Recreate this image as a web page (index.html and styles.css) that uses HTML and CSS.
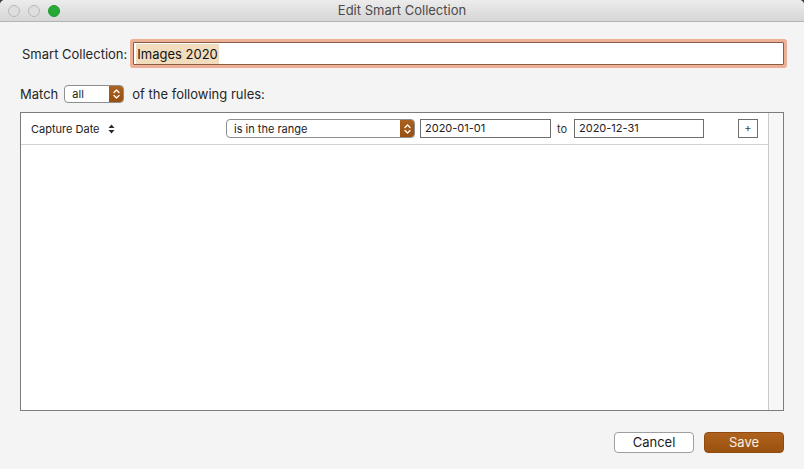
FILE: index.html
```html
<!DOCTYPE html>
<html>
<head>
<meta charset="utf-8">
<link rel="stylesheet" href="styles.css">
</head>
<body>
<div class="window">
  <div class="titlebar">
    <div class="lights">
      <span class="light gray"></span>
      <span class="light gray"></span>
      <span class="light green"></span>
    </div>
    <div class="title">Edit Smart Collection</div>
  </div>
  <div class="content">
    <div class="name-row">
      <span class="label">Smart Collection:</span>
      <div class="name-input"><span class="sel">Images 2020</span></div>
    </div>
    <div class="match-row">
      <span class="label">Match</span>
      <div class="popup small">
        <span class="popup-text">all</span>
        <span class="stepper"><svg width="9" height="12" viewBox="0 0 9 12"><path d="M2 4.5 L4.5 2 L7 4.5 M2 7.5 L4.5 10 L7 7.5" fill="none" stroke="#fff" stroke-width="1.3" stroke-linecap="round" stroke-linejoin="round"/></svg></span>
      </div>
      <span class="label">of the following rules:</span>
    </div>
    <div class="rules">
      <div class="rules-list">
        <div class="rule">
          <div class="field-name">Capture Date <svg class="sort" width="7" height="10" viewBox="0 0 7 10"><path d="M0.5 4 L3.5 0.5 L6.5 4 Z M0.5 6 L3.5 9.5 L6.5 6 Z" fill="#2a2a2a"/></svg></div>
          <div class="popup wide">
            <span class="popup-text">is in the range</span>
            <span class="stepper"><svg width="9" height="12" viewBox="0 0 9 12"><path d="M2 4.5 L4.5 2 L7 4.5 M2 7.5 L4.5 10 L7 7.5" fill="none" stroke="#fff" stroke-width="1.3" stroke-linecap="round" stroke-linejoin="round"/></svg></span>
          </div>
          <div class="textfield f1">2020-01-01</div>
          <span class="to">to</span>
          <div class="textfield f2">2020-12-31</div>
          <div class="plus">+</div>
        </div>
      </div>
      <div class="scroll"></div>
    </div>
    <div class="buttons">
      <div class="btn cancel">Cancel</div>
      <div class="btn save">Save</div>
    </div>
  </div>
</div>
</body>
</html>
```
FILE: styles.css
```css
html, body {
  margin: 0;
  padding: 0;
  background: #3c3c3c;
}
body {
  width: 804px;
  height: 469px;
  overflow: hidden;
  font-family: Inter, "Liberation Sans", sans-serif;
  color: #262626;
}
.window {
  width: 804px;
  height: 469px;
  background: #f4f4f4;
  border-radius: 5px 5px 0 0;
  overflow: hidden;
  display: flex;
  flex-direction: column;
}
.titlebar {
  height: 21px;
  flex: none;
  border-bottom: 1px solid #b4b4b4;
  background: linear-gradient(#ececec, #d6d6d6);
  display: flex;
  align-items: center;
  position: relative;
}
.lights {
  display: flex;
  gap: 8px;
  padding-left: 8px;
}
.light {
  width: 12px;
  height: 12px;
  border-radius: 50%;
  box-sizing: border-box;
}
.light.gray {
  background: #dedede;
  border: 1px solid #b8b8b8;
}
.light.green {
  background: #27a935;
  border: 1px solid #1e9a2b;
}
.title {
  position: absolute;
  left: 0;
  right: 0;
  top: 0;
  line-height: 21px;
  text-align: center;
  font-size: 13px;
  color: #4a4a4a;
}
.content {
  padding: 0 20px;
  display: flex;
  flex-direction: column;
}
.label {
  font-size: 13px;
  color: #262626;
}
.name-row {
  margin-top: 20px;
  display: flex;
  align-items: center;
  padding-left: 2px;
  gap: 6px;
}
.name-input {
  flex: 1;
  height: 23px;
  box-sizing: border-box;
  border: 1px solid #8d5a42;
  background: #fff;
  box-shadow: 0 0 0 3px #ebb095;
  border-radius: 1px;
  display: flex;
  align-items: center;
  padding-left: 2px;
  font-size: 13px;
  color: #111;
}
.sel {
  background: #f1dcbd;
  line-height: 20px;
  padding: 0 1px;
}
.match-row {
  margin-top: 20px;
  display: flex;
  align-items: center;
  gap: 6px;
}
.match-row .popup {
  margin-right: 2px;
}
.popup {
  height: 18px;
  box-sizing: border-box;
  border: 1px solid #8e8e8e;
  border-radius: 4px;
  background: #fff;
  display: flex;
  align-items: center;
  overflow: hidden;
}
.popup.small {
  width: 60px;
}
.popup.wide {
  width: 189px;
  height: 19px;
}
.popup-text {
  flex: 1;
  font-size: 11px;
  padding-left: 7px;
  color: #222;
}
.stepper {
  width: 14px;
  height: 100%;
  background: linear-gradient(#ab611f, #97500f);
  display: flex;
  align-items: center;
  justify-content: center;
}
.rules {
  margin-top: 9px;
  height: 299px;
  box-sizing: border-box;
  border: 1px solid #7c7c7c;
  background: #fff;
  display: grid;
  grid-template-columns: 1fr 15px;
}
.rules-list {
  display: flex;
  flex-direction: column;
}
.rule {
  height: 32px;
  box-sizing: border-box;
  border-bottom: 1px solid #d2d2d2;
  display: flex;
  align-items: center;
  padding-left: 10px;
  font-size: 11px;
}
.field-name {
  width: 195px;
  display: flex;
  align-items: center;
  gap: 8px;
  color: #222;
}
.textfield {
  height: 19px;
  box-sizing: border-box;
  border: 1px solid #6e6e6e;
  background: #fff;
  font-size: 11px;
  line-height: 17px;
  padding-left: 4px;
  color: #222;
}
.f1 {
  width: 131px;
  margin-left: 5px;
}
.to {
  margin-left: 6px;
  width: 17px;
  color: #333;
}
.f2 {
  width: 130px;
}
.plus {
  margin-left: 34px;
  width: 20px;
  height: 19px;
  box-sizing: border-box;
  border: 1px solid #6e6e6e;
  font-size: 11px;
  line-height: 17px;
  text-align: center;
  color: #444;
}
.scroll {
  border-left: 1px solid #cacaca;
  background: #f7f7f7;
}
.buttons {
  margin-top: 21px;
  display: flex;
  justify-content: flex-end;
  gap: 10px;
}
.btn {
  height: 21px;
  box-sizing: border-box;
  border-radius: 4px;
  font-size: 13px;
  line-height: 19px;
  text-align: center;
}
.cancel {
  width: 80px;
  background: #fff;
  border: 1px solid #9f9f9f;
  color: #222;
}
.save {
  width: 80px;
  background: linear-gradient(#ae621d, #9b520f);
  border: 1px solid #914b0e;
  color: #fbeee2;
}
```
